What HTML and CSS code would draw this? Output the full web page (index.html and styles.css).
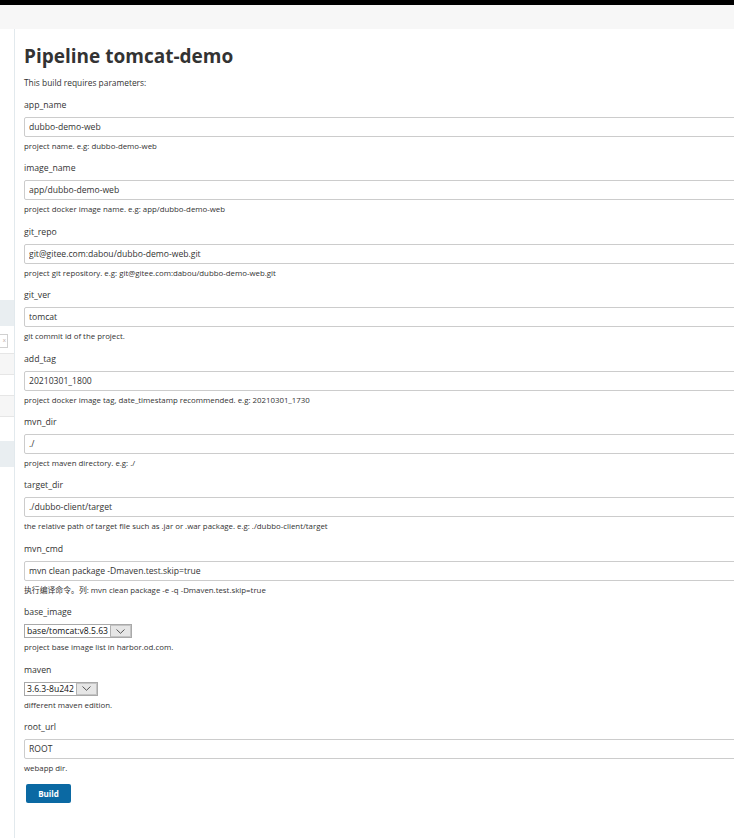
FILE: index.html
```html
<!DOCTYPE html>
<html>
<head>
<meta charset="utf-8">
<link rel="stylesheet" href="styles.css">
</head>
<body>
<div class="topbar"></div>
<div class="subbar"></div>
<div class="layout">
  <aside class="sidebar">
    <div class="sb-spacer"></div>
    <div class="sb-block"></div>
    <div class="sb-search"><span class="sb-x">x</span></div>
    <div class="sb-row sb-shade sb-first"></div>
    <div class="sb-row"></div>
    <div class="sb-row sb-shade"></div>
    <div class="sb-gap"></div>
    <div class="sb-block"></div>
  </aside>
  <main class="main">
    <h1 class="title">Pipeline tomcat-demo</h1>
    <p class="intro">This build requires parameters:</p>

    <div class="param">
      <div class="label">app_name</div>
      <input class="text" type="text" value="dubbo-demo-web">
      <div class="help">project name. e.g: dubbo-demo-web</div>
    </div>
    <div class="param">
      <div class="label">image_name</div>
      <input class="text" type="text" value="app/dubbo-demo-web">
      <div class="help">project docker image name. e.g: app/dubbo-demo-web</div>
    </div>
    <div class="param">
      <div class="label">git_repo</div>
      <input class="text" type="text" value="git@gitee.com:dabou/dubbo-demo-web.git">
      <div class="help">project git repository. e.g: git@gitee.com:dabou/dubbo-demo-web.git</div>
    </div>
    <div class="param">
      <div class="label">git_ver</div>
      <input class="text" type="text" value="tomcat">
      <div class="help">git commit id of the project.</div>
    </div>
    <div class="param">
      <div class="label">add_tag</div>
      <input class="text" type="text" value="20210301_1800">
      <div class="help">project docker image tag, date_timestamp recommended. e.g: 20210301_1730</div>
    </div>
    <div class="param">
      <div class="label">mvn_dir</div>
      <input class="text" type="text" value="./">
      <div class="help">project maven directory. e.g: ./</div>
    </div>
    <div class="param">
      <div class="label">target_dir</div>
      <input class="text" type="text" value="./dubbo-client/target">
      <div class="help">the relative path of target file such as .jar or .war package. e.g: ./dubbo-client/target</div>
    </div>
    <div class="param">
      <div class="label">mvn_cmd</div>
      <input class="text" type="text" value="mvn clean package -Dmaven.test.skip=true">
      <div class="help">执行编译命令。列: mvn clean package -e -q -Dmaven.test.skip=true</div>
    </div>
    <div class="param">
      <div class="label">base_image</div>
      <div class="select">
        <span class="select-value">base/tomcat:v8.5.63</span>
        <span class="select-btn"><svg width="9" height="5" viewBox="0 0 9 5"><path d="M0.5 0.5 L4.5 4.3 L8.5 0.5" fill="none" stroke="#444" stroke-width="0.9"/></svg></span>
      </div>
      <div class="help">project base image list in harbor.od.com.</div>
    </div>
    <div class="param">
      <div class="label">maven</div>
      <div class="select">
        <span class="select-value">3.6.3-8u242</span>
        <span class="select-btn"><svg width="9" height="5" viewBox="0 0 9 5"><path d="M0.5 0.5 L4.5 4.3 L8.5 0.5" fill="none" stroke="#444" stroke-width="0.9"/></svg></span>
      </div>
      <div class="help">different maven edition.</div>
    </div>
    <div class="param">
      <div class="label">root_url</div>
      <input class="text" type="text" value="ROOT">
      <div class="help">webapp dir.</div>
    </div>
    <button class="build" type="button">Build</button>
  </main>
</div>
</body>
</html>
```
FILE: styles.css
```css
html, body {
  margin: 0;
  padding: 0;
  overflow: hidden;
  background: #fff;
}
body {
  font-family: "Open Sans", "Noto Sans CJK SC", sans-serif;
  color: #333;
  width: 734px;
  height: 838px;
}
.topbar {
  height: 5px;
  background: #000;
}
.subbar {
  height: 24px;
  background: #f7f7f7;
}
.layout {
  display: flex;
  height: 809px;
}
.sidebar {
  width: 14px;
  flex: none;
  border-right: 1px solid #e2e9ed;
  display: flex;
  flex-direction: column;
}
.sb-spacer { height: 271px; }
.sb-block {
  height: 26px;
  background: #e9eef1;
}
.sb-search {
  margin-top: 8px;
  height: 12px;
  width: 7px;
  border: 1px solid #d0d0d0;
  border-left: none;
  font-size: 6px;
  line-height: 11px;
  text-align: right;
}
.sb-x {
  color: #b9a6a0;
  padding-right: 1px;
}
.sb-row {
  height: 20px;
  border-bottom: 1px solid #e6e6e6;
}
.sb-first { border-top: 1px solid #e6e6e6; margin-top: 5px; }
.sb-shade { background: #f6f6f6; }
.sb-gap { height: 24px; }

.main {
  flex: 1;
  min-width: 0;
  padding-left: 9px;
}
.title {
  margin: 15px 0 0;
  font-size: 19px;
  line-height: 24px;
  font-weight: 700;
  color: #333;
}
.intro {
  margin: 9px 0 0;
  font-size: 8.4px;
  line-height: 12px;
}
.param {
  margin-top: 9.4px;
}
.intro + .param { margin-top: 9px; }
.label {
  font-size: 8.7px;
  line-height: 14px;
}
.text {
  display: block;
  box-sizing: border-box;
  margin: 5px 0 0;
  width: 760px;
  height: 20px;
  padding: 0 4px;
  border: 1px solid #cccccc;
  border-radius: 2px;
  font-family: inherit;
  font-size: 8.6px;
  color: #333;
  background: #fff;
  outline: none;
}
.help {
  margin-top: 3px;
  font-size: 7.85px;
  line-height: 12px;
  color: #333;
}
.select {
  margin-top: 5px;
  display: flex;
  width: fit-content;
  align-items: stretch;
  height: 14px;
  box-sizing: border-box;
  border: 1px solid #a9a9a9;
  background: #fff;
}
.select-value {
  font-size: 8.6px;
  line-height: 12px;
  color: #111;
  padding: 0 2px;
}
.select-btn {
  width: 21px;
  box-sizing: border-box;
  background: #e6e6e6;
  border: 1px solid #c4c4c4;
  border-left-color: #b0b0b0;
  display: flex;
  align-items: center;
  justify-content: center;
}
.build {
  display: block;
  margin: 10px 0 0 2px;
  width: 45px;
  height: 19px;
  padding: 0;
  border: none;
  border-radius: 2px;
  background: #0b69a3;
  color: #fff;
  font-family: inherit;
  font-size: 8px;
  font-weight: 700;
}
```
